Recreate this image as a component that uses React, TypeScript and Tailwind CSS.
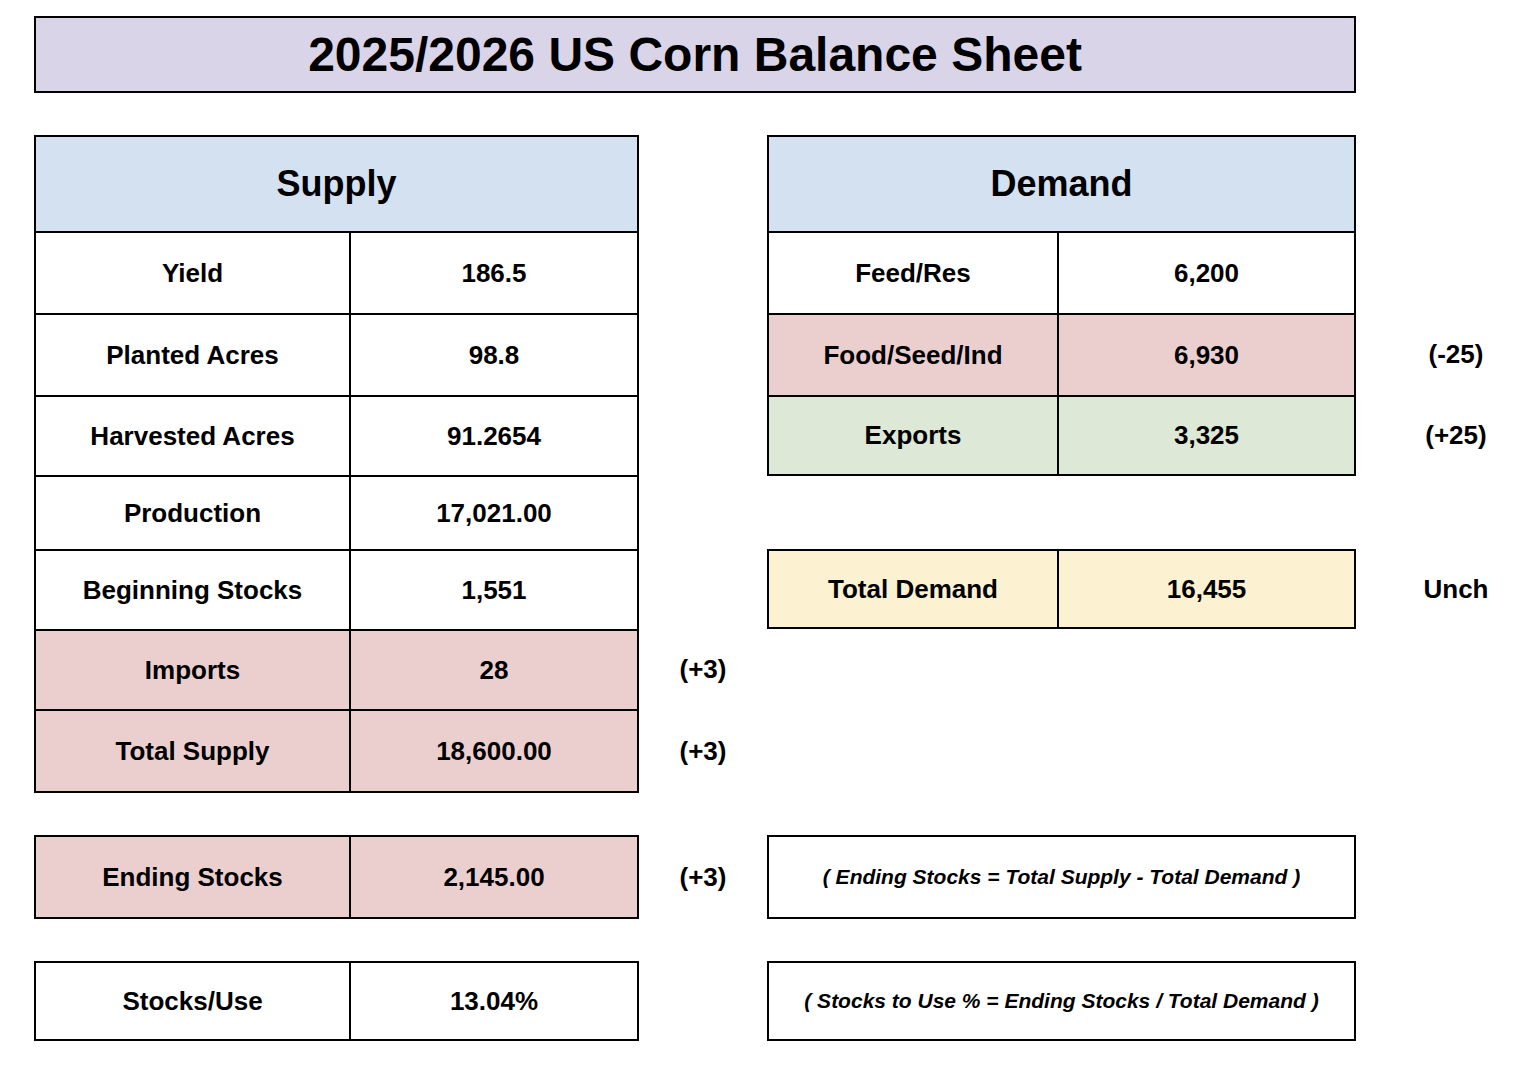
import React from 'react';
import { clsx } from 'clsx';

type Row = {
  label: string;
  value: string;
  h: string;
  bg?: string;
  note?: string;
  last?: boolean;
};

const supplyRows: Row[] = [
  { label: 'Yield', value: '186.5', h: 'h-[82px]' },
  { label: 'Planted Acres', value: '98.8', h: 'h-[82px]' },
  { label: 'Harvested Acres', value: '91.2654', h: 'h-[80px]' },
  { label: 'Production', value: '17,021.00', h: 'h-[74px]' },
  { label: 'Beginning Stocks', value: '1,551', h: 'h-[80px]' },
  { label: 'Imports', value: '28', h: 'h-[80px]', bg: 'bg-[#ebcfcf]', note: '(+3)' },
  { label: 'Total Supply', value: '18,600.00', h: 'h-[84px]', bg: 'bg-[#ebcfcf]', note: '(+3)', last: true },
];

const demandRows: Row[] = [
  { label: 'Feed/Res', value: '6,200', h: 'h-[82px]' },
  { label: 'Food/Seed/Ind', value: '6,930', h: 'h-[82px]', bg: 'bg-[#ebcfcf]', note: '(-25)' },
  { label: 'Exports', value: '3,325', h: 'h-[81px]', bg: 'bg-[#dde8d6]', note: '(+25)', last: true },
];

function SupplyRow({ row, first }: { row: Row; first?: boolean }) {
  return (
    <div className={clsx('flex', row.h)}>
      <div
        className={clsx(
          'flex w-[605px] border-x-2 border-black',
          first ? 'border-t-2' : 'border-t-2',
          row.last && 'border-b-2',
          row.bg ?? 'bg-white'
        )}
      >
        <div className="flex w-[313px] items-center justify-center">{row.label}</div>
        <div className="flex flex-1 items-center justify-center border-l-2 border-black">{row.value}</div>
      </div>
      <div className="flex w-[128px] items-center justify-center">{row.note}</div>
    </div>
  );
}

function DemandRow({ row }: { row: Row }) {
  return (
    <div className={clsx('flex', row.h)}>
      <div
        className={clsx(
          'flex w-[589px] border-x-2 border-t-2 border-black',
          row.last && 'border-b-2',
          row.bg ?? 'bg-white'
        )}
      >
        <div className="flex w-[288px] items-center justify-center">{row.label}</div>
        <div className="flex flex-1 items-center justify-center border-l-2 border-black">{row.value}</div>
      </div>
      <div className="flex w-[182px] items-center justify-center pl-[18px]">{row.note}</div>
    </div>
  );
}

function Formula({ text, h }: { text: string; h: string }) {
  return (
    <div className={clsx('flex w-[589px] items-center justify-center border-2 border-black text-[21px] italic', h)}>
      {text}
    </div>
  );
}

export default function App() {
  return (
    <div className="min-h-screen bg-white pl-[34px] pt-[16px] font-['Liberation_Sans',Arial,sans-serif] text-[26px] font-bold text-black">
      <div className="flex h-[77px] w-[1322px] items-center justify-center border-2 border-black bg-[#d9d4e8] text-[48px]">
        2025/2026 US Corn Balance Sheet
      </div>

      <div className="mt-[42px] flex">
        <div className="flex flex-col">
          <div className="flex h-[96px]">
            <div className="flex w-[605px] items-center justify-center border-x-2 border-t-2 border-black bg-[#d4e1f1] text-[36px]">
              Supply
            </div>
            <div className="w-[128px]" />
          </div>
          {supplyRows.map((r) => (
            <SupplyRow key={r.label} row={r} />
          ))}
        </div>

        <div className="flex flex-col">
          <div className="flex h-[96px]">
            <div className="flex w-[589px] items-center justify-center border-x-2 border-t-2 border-black bg-[#d4e1f1] text-[36px]">
              Demand
            </div>
          </div>
          {demandRows.map((r) => (
            <DemandRow key={r.label} row={r} />
          ))}
          <div className="mt-[73px]">
            <DemandRow
              row={{ label: 'Total Demand', value: '16,455', h: 'h-[80px]', bg: 'bg-[#fcf1d0]', note: 'Unch', last: true }}
            />
          </div>
        </div>
      </div>

      <div className="mt-[42px] flex">
        <SupplyRow
          row={{ label: 'Ending Stocks', value: '2,145.00', h: 'h-[84px]', bg: 'bg-[#ebcfcf]', note: '(+3)', last: true }}
        />
        <Formula text="( Ending Stocks = Total Supply - Total Demand )" h="h-[84px]" />
      </div>

      <div className="mt-[42px] flex">
        <SupplyRow row={{ label: 'Stocks/Use', value: '13.04%', h: 'h-[80px]', last: true }} />
        <Formula text="( Stocks to Use % = Ending Stocks / Total Demand )" h="h-[80px]" />
      </div>
    </div>
  );
}
